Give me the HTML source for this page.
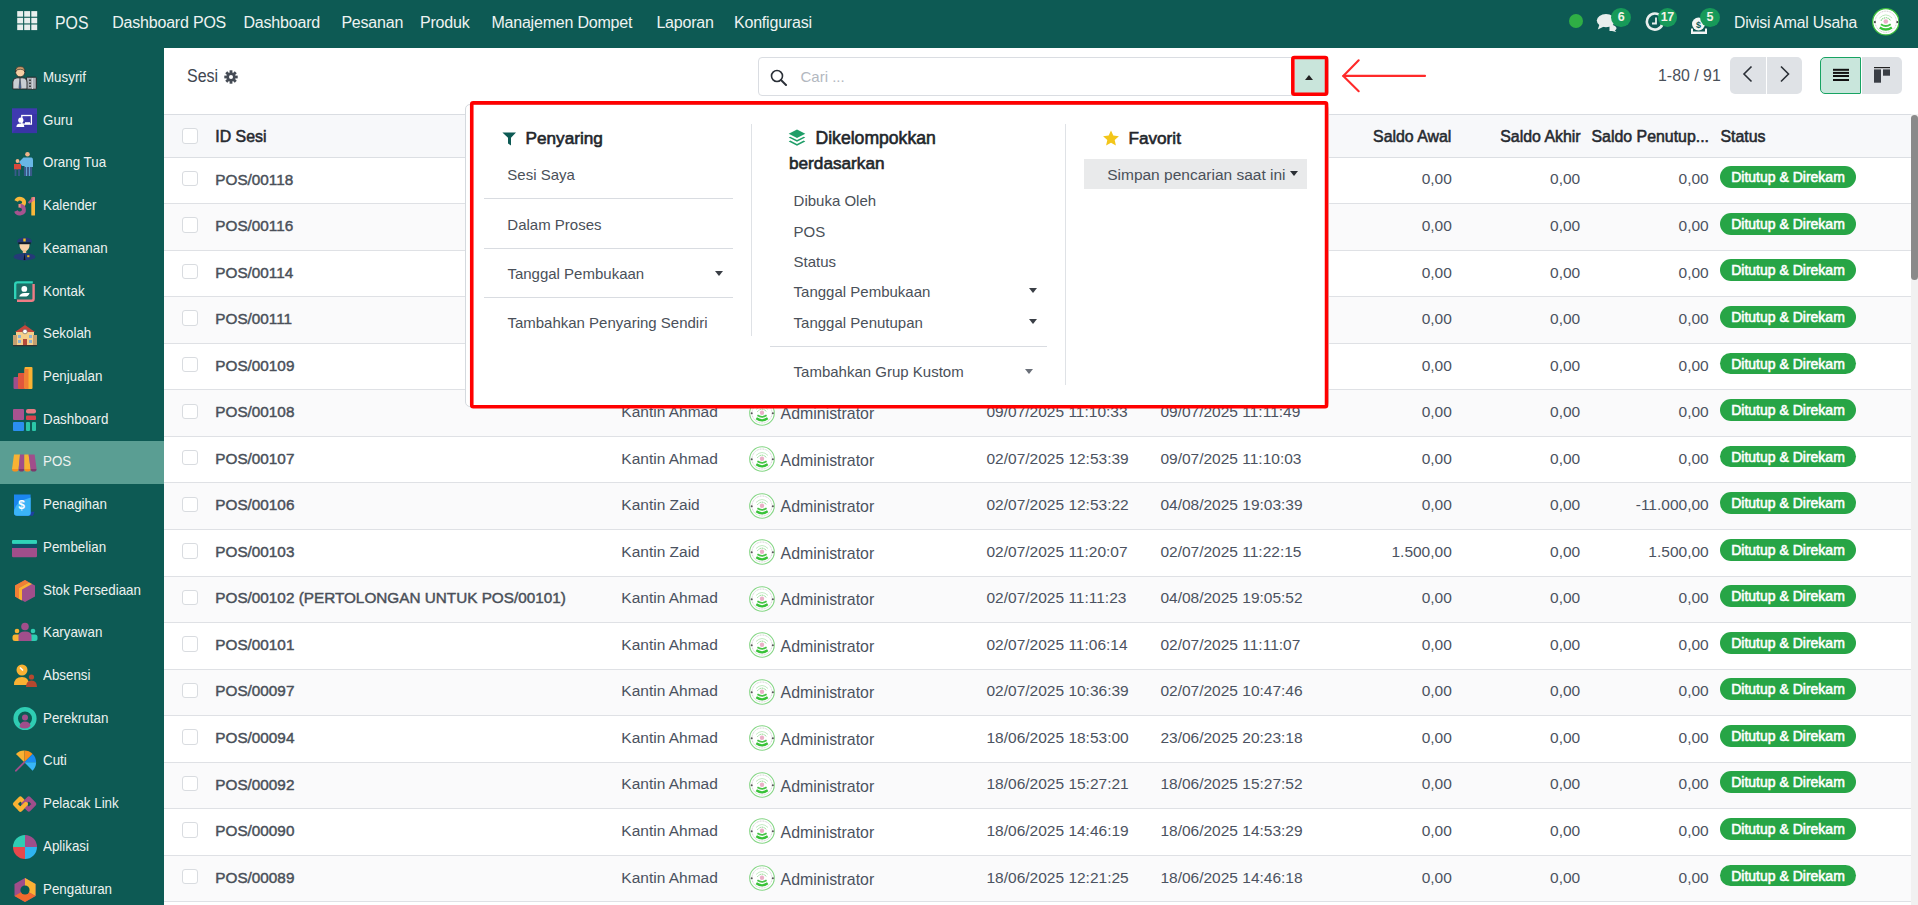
<!DOCTYPE html><html><head><meta charset="utf-8"><title>Sesi - POS</title><style>
*{box-sizing:border-box;margin:0;padding:0}
html,body{width:1918px;height:905px;overflow:hidden;background:#fff}
body{font-family:"Liberation Sans",sans-serif;position:relative;color:#4a5059}
.ab{position:absolute;white-space:nowrap}
#nav{position:absolute;left:0;top:0;width:1918px;height:48px;background:#0d5a54}
#side{position:absolute;left:0;top:48px;width:164px;height:857px;background:#0d5a54}
.nt{position:absolute;color:#eef3f2;font-size:16px;line-height:18px;white-space:nowrap;letter-spacing:-0.2px}
.si{position:absolute;left:0;width:164px;height:43px}
.si .tx{position:absolute;left:43px;top:11.9px;color:#eef2f1;font-size:15px;line-height:18px;white-space:nowrap;transform:scaleX(0.89);transform-origin:0 0}
.si svg{position:absolute;left:12px;top:9px}
.rw{position:absolute;left:164px;width:1747px;border-bottom:1px solid #dfe1e5}
.cb{position:absolute;left:182.3px;width:15.4px;height:15.4px;border:1px solid #d9dce0;border-radius:3px;background:#fff}
.c{position:absolute;font-size:15.5px;line-height:18px;white-space:nowrap;color:#4b5260}
.r{text-align:right}
.idc{font-weight:normal;color:#4a5059;-webkit-text-stroke:0.45px #4a5059}
.hd{font-weight:normal;color:#262a30;-webkit-text-stroke:0.55px #262a30}
.bdg{position:absolute;left:1720px;width:136px;height:21.8px;border-radius:11px;background:#27a546;color:#fff;font-weight:normal;font-size:14px;line-height:22.6px;text-align:center;-webkit-text-stroke:0.55px #fff}
.av{position:absolute;left:748.5px;width:26px;height:26px}
.dd{position:absolute;font-size:15px;line-height:18px;white-space:nowrap;color:#4a5059}
.dh{position:absolute;font-size:16px;line-height:18px;white-space:nowrap;color:#22262b;font-weight:normal;-webkit-text-stroke:0.6px #22262b}
.sep{position:absolute;height:1px;background:#d9dce1}
.vsep{position:absolute;width:1px;background:#dfe2e6}
.caret{position:absolute;width:0;height:0;border-left:4.5px solid transparent;border-right:4.5px solid transparent;border-top:5px solid #333}
</style></head><body>
<div id="nav">
<svg class="ab" style="left:0;top:0" width="48" height="48"><rect x="17.2" y="11.1" width="5.9" height="5.6" fill="#e9efee"/><rect x="24.2" y="11.1" width="5.9" height="5.6" fill="#e9efee"/><rect x="31.3" y="11.1" width="5.9" height="5.6" fill="#e9efee"/><rect x="17.2" y="17.8" width="5.9" height="5.6" fill="#e9efee"/><rect x="24.2" y="17.8" width="5.9" height="5.6" fill="#e9efee"/><rect x="31.3" y="17.8" width="5.9" height="5.6" fill="#e9efee"/><rect x="17.2" y="24.5" width="5.9" height="5.6" fill="#e9efee"/><rect x="24.2" y="24.5" width="5.9" height="5.6" fill="#e9efee"/><rect x="31.3" y="24.5" width="5.9" height="5.6" fill="#e9efee"/></svg>
<div class="nt" style="left:55px;top:13px;font-size:18px;line-height:20px;transform:scaleX(0.88);transform-origin:0 0;letter-spacing:0">POS</div>
<div class="nt" style="left:112.2px;top:14px">Dashboard POS</div>
<div class="nt" style="left:243.5px;top:14px">Dashboard</div>
<div class="nt" style="left:341.4px;top:14px">Pesanan</div>
<div class="nt" style="left:420.0px;top:14px">Produk</div>
<div class="nt" style="left:491.4px;top:14px">Manajemen Dompet</div>
<div class="nt" style="left:656.4px;top:14px">Laporan</div>
<div class="nt" style="left:734.0px;top:14px">Konfigurasi</div>
</div>
<div class="ab" style="left:1569.3px;top:14px;width:14px;height:14px;border-radius:50%;background:#2fae45"></div>
<svg class="ab" style="left:1596px;top:13px" width="23" height="19" viewBox="0 0 23 19"><path d="M13.5 11.5 C17.5 11.5 20.5 13.5 20.5 15.2 C20.5 16 19.8 16.8 18.8 17.3 L20.3 19 L16 17.9 C15.2 18 14.4 18 13.5 18 Z" fill="#e9eeed"/><ellipse cx="10" cy="7.6" rx="9.2" ry="6.6" fill="#e9eeed"/><path d="M3.5 11.5 L1.8 16.5 L8 13.5 Z" fill="#e9eeed"/></svg>
<svg class="ab" style="left:1645px;top:12px" width="20" height="20" viewBox="0 0 20 20"><path d="M15.9 4.3 A8 8 0 1 0 17.5 12" fill="none" stroke="#e9eeed" stroke-width="2.6"/><path d="M11 5.5 V11.5 H7" fill="none" stroke="#e9eeed" stroke-width="1.8"/></svg>
<svg class="ab" style="left:1690px;top:17px" width="19" height="18" viewBox="0 0 19 18"><circle cx="8.5" cy="7" r="6.5" fill="#f2f5f4"/><text x="8.5" y="10.5" font-size="9" font-family="Liberation Sans" text-anchor="middle" fill="#0d5a54" font-weight="bold">$</text><path d="M1 11.5 H3 V14.5 H15 V11.5 H17 V17 H1 Z" fill="#f2f5f4"/></svg>
<div class="ab" style="left:1611.2px;top:7.5px;width:19.5px;height:19px;border-radius:50%;background:#179a59;color:#f4f4e8;font-size:12.5px;line-height:19px;text-align:center;font-weight:bold;letter-spacing:-0.5px">6</div>
<div class="ab" style="left:1657.5px;top:7.5px;width:19.5px;height:19px;border-radius:50%;background:#179a59;color:#f4f4e8;font-size:12.5px;line-height:19px;text-align:center;font-weight:bold;letter-spacing:-0.5px">17</div>
<div class="ab" style="left:1700.0px;top:7.5px;width:19.5px;height:19px;border-radius:50%;background:#179a59;color:#f4f4e8;font-size:12.5px;line-height:19px;text-align:center;font-weight:bold;letter-spacing:-0.5px">5</div>
<div class="nt" style="left:1734px;top:14px;font-size:15.8px;letter-spacing:-0.25px">Divisi Amal Usaha</div>
<svg class="ab" style="left:1871.8px;top:8px" width="27.6" height="27.6" viewBox="0 0 26 26"><circle cx="13" cy="13" r="12.4" fill="#fff" stroke="#3fc03f" stroke-width="1.2"/><circle cx="13" cy="13" r="10" fill="none" stroke="#bdbdbd" stroke-width="0.8" stroke-dasharray="0.9 0.7"/><circle cx="2.7" cy="13.3" r="1" fill="#444"/><circle cx="23.9" cy="13.3" r="1" fill="#444"/><path d="M8.3 11.8 Q13 6.5 17.7 11.8" fill="none" stroke="#7fd37f" stroke-width="1" stroke-dasharray="1.2 0.6"/><path d="M7 9.5 Q13 3.5 19 9.5" fill="none" stroke="#b5e6b5" stroke-width="0.8"/><circle cx="13" cy="12.7" r="2.2" fill="#ebb0c8"/><path d="M8.4 15.3 Q13 18.6 17.6 15.3" fill="none" stroke="#47c447" stroke-width="1.7"/><path d="M7.3 18.3 Q13 22.3 18.7 18.3" fill="none" stroke="#38c238" stroke-width="2.3"/></svg>
<div id="side"></div>
<div class="si" style="top:56.1px"><svg width="26" height="26" viewBox="0 0 26 26"><rect x="14.5" y="12.2" width="9.8" height="12" rx="0.8" fill="#aab0b6" stroke="#222" stroke-width="0.9"/><path d="M17 14.5 h2 v1.5 h-2z M17 17.5 h2 v1.5 h-2z M17 20.5 h2 v1.5 h-2z" fill="#444"/><path d="M20.5 13 V24" stroke="#d0d4d8" stroke-width="1"/><path d="M0.8 24 V17 Q1 13 5 12.8 H10.5 Q14.8 13 15 17 V24 Z" fill="#c9ced3" stroke="#222" stroke-width="0.9"/><path d="M8 13 L7 22.5 L8 24 L9 22.5 Z" fill="#4a6fb0" stroke="#222" stroke-width="0.5"/><circle cx="8.2" cy="7.2" r="4.6" fill="#f5cfa4" stroke="#222" stroke-width="0.7"/><path d="M3.5 7 Q3.3 1.5 8.2 1.6 Q13 1.5 12.9 7 Q12 4 8.2 4.3 Q4.5 4 3.5 7Z" fill="#c89a6a" stroke="#222" stroke-width="0.6"/></svg><div class="tx">Musyrif</div></div>
<div class="si" style="top:98.8px"><svg width="26" height="26" viewBox="0 0 26 26"><rect x="0" y="0.3" width="25" height="24.8" fill="#3f3ab0"/><path d="M0 25.1 L19 6 L25 6 V25.1 Z" fill="#3532a0" opacity="0.6"/><rect x="9.8" y="7.5" width="9.6" height="8.6" fill="none" stroke="#fff" stroke-width="1.3"/><rect x="13" y="14.2" width="5" height="2" fill="#fff"/><circle cx="8.8" cy="12.2" r="2.6" fill="#fff"/><path d="M4.4 18.9 Q4.6 15.6 8.4 15.6 Q12.2 15.6 12.3 18.9Z" fill="#fff"/></svg><div class="tx">Guru</div></div>
<div class="si" style="top:141.5px"><svg width="26" height="26" viewBox="0 0 26 26"><circle cx="15.5" cy="3.2" r="2.3" fill="#f0b48a"/><path d="M11.5 6.5 H19.5 Q21 6.7 21 9 V16 H19.5 V25 H12.5 V15 H10 L7 11 L8.5 9.5 Z" fill="#69b7e6"/><path d="M13 16 V25 M16 16 V25 M19 16 V25" stroke="#3a5a8a" stroke-width="2.2"/><circle cx="5.5" cy="10" r="1.9" fill="#f0b48a"/><path d="M2 13 H9 V18.5 H2Z" fill="#d9483b"/><path d="M3.5 18 V25 M7 18 V25" stroke="#3a5a8a" stroke-width="1.8"/></svg><div class="tx">Orang Tua</div></div>
<div class="si" style="top:184.3px"><svg width="26" height="26" viewBox="0 0 26 26"><path d="M4.2 8 A4.1 3.6 0 1 1 8.1 12.9" fill="none" stroke="#f9b83a" stroke-width="3.9"/><path d="M8.1 12.7 A4.1 3.9 0 1 1 4.0 18" fill="none" stroke="#a6538f" stroke-width="3.9"/><path d="M6.5 12.8 H8.6" stroke="#f08a8a" stroke-width="3.6"/><rect x="19.3" y="4.2" width="3.7" height="18.3" rx="0.6" fill="#f9b83a"/><path d="M15.9 9.2 L20.8 4.3 Q22 3.3 23 4.5 V6.8 L17.2 10.8 Z" fill="#b75a8c"/><path d="M20.5 4.5 Q22 3.3 23 4.5 V7 L20 8.7Z" fill="#f08a8a"/></svg><div class="tx">Kalender</div></div>
<div class="si" style="top:227.0px"><svg width="26" height="26" viewBox="0 0 26 26"><path d="M5 6.5 Q4.5 2 12.5 1.5 Q20.5 2 20 6.5 Z" fill="#253a78"/><rect x="6.3" y="6.3" width="12.4" height="2" fill="#121a2c"/><path d="M11.3 2.5 H13.7 V5.5 H11.3Z" fill="#f3c41c"/><path d="M7.4 8.3 H17.6 Q17.6 14.8 12.5 15.3 Q7.4 14.8 7.4 8.3Z" fill="#f9d3a9"/><rect x="10.8" y="14" width="3.4" height="3" fill="#f0c090"/><ellipse cx="12.5" cy="20.8" rx="11" ry="3.6" fill="#253a78"/><path d="M12.5 17.2 L11.6 24 H13.4Z" fill="#111"/><rect x="15.2" y="19.2" width="2.2" height="2" fill="#e9b820"/></svg><div class="tx">Keamanan</div></div>
<div class="si" style="top:269.7px"><svg width="26" height="26" viewBox="0 0 26 26"><rect x="4.4" y="4.6" width="16.5" height="16.5" fill="#1d6e66"/><path d="M21.6 5 V19.8 Q21.6 21.8 19.6 21.8 H5" fill="none" stroke="#ef7c85" stroke-width="2.4"/><path d="M3.2 20 V5.6 Q3.2 3.4 5.4 3.4 H20.8" fill="none" stroke="#2fd3b8" stroke-width="2.4"/><circle cx="12.3" cy="9.9" r="2.9" fill="#fff"/><path d="M7.2 17.6 Q8.4 13.9 12.3 13.9 H17.6 Q16.6 17.6 12.6 17.6 Z" fill="#fff"/></svg><div class="tx">Kontak</div></div>
<div class="si" style="top:312.4px"><svg width="26" height="26" viewBox="0 0 26 26"><path d="M3 11 L13 4 L23 11 Z" fill="#c5463b"/><rect x="4" y="11" width="18" height="13" fill="#f6d08a"/><rect x="1" y="14" width="4" height="10" fill="#c5a070"/><rect x="21" y="14" width="4" height="10" fill="#c5a070"/><circle cx="13" cy="10.5" r="2.3" fill="#fff" stroke="#555" stroke-width="0.6"/><rect x="11" y="18" width="4" height="6" fill="#b54a3a"/><path d="M6 14 h3 v3 h-3z M17 14 h3 v3 h-3z M6 19 h3 v3 h-3z M17 19 h3 v3 h-3z" fill="#8fb3d0"/><rect x="1" y="24" width="24" height="1.3" fill="#333"/><path d="M13 4 V1" stroke="#555" stroke-width="0.8"/></svg><div class="tx">Sekolah</div></div>
<div class="si" style="top:355.1px"><svg width="26" height="26" viewBox="0 0 26 26"><rect x="1.5" y="13" width="6" height="12" rx="1" fill="#a04e8b"/><rect x="6" y="9" width="7" height="16" rx="1" fill="#e0563c"/><rect x="12.5" y="3" width="8" height="22" rx="1" fill="#f9b233"/><rect x="12.5" y="5" width="4" height="20" fill="#f07f35"/></svg><div class="tx">Penjualan</div></div>
<div class="si" style="top:397.9px"><svg width="26" height="26" viewBox="0 0 26 26"><rect x="1" y="2" width="11" height="11" rx="1" fill="#a65390"/><rect x="14" y="2" width="10" height="4.5" rx="2" fill="#e77b84"/><rect x="14" y="8.5" width="10" height="4.5" rx="1" fill="#d8434d"/><rect x="1" y="15" width="11" height="9" rx="1" fill="#2b8ef0"/><rect x="14" y="15" width="4" height="9" rx="1" fill="#2bc5a8"/><rect x="20" y="15" width="4" height="9" rx="1" fill="#2bc5a8"/></svg><div class="tx">Dashboard</div></div>
<div class="si" style="top:440.6px;background:#5a9e93"><svg width="26" height="26" viewBox="0 0 26 26"><path d="M2 4.5 H8 L6.6 19 H0 Z" fill="#f9b233"/><path d="M8 4.5 H12.3 V19 H6.6 Z" fill="#a04e8b"/><path d="M12.3 4.5 H16.6 L18.6 19 H12.3 Z" fill="#f9b233"/><path d="M16.6 4.5 H22.6 L24.6 19 H18.6 Z" fill="#a04e8b"/><path d="M0 19 A3.3 2.6 0 0 0 6.6 19Z" fill="#f7901e"/><path d="M6.6 19 A2.85 2.6 0 0 0 12.3 19Z" fill="#7d3a6d"/><path d="M12.3 19 A3.15 2.6 0 0 0 18.6 19Z" fill="#f7901e"/><path d="M18.6 19 A3 2.6 0 0 0 24.6 19Z" fill="#7d3a6d"/></svg><div class="tx">POS</div></div>
<div class="si" style="top:483.3px"><svg width="26" height="26" viewBox="0 0 26 26"><path d="M8.6 19.8 H22.6 L21 23.7 H8.6Z" fill="#1e3f9e"/><path d="M2 2.5 H18.6 V21 Q18.6 23.7 16 23.7 H5 Q2 23.7 2 20.5Z" fill="#1b86ef"/><path d="M2 20.5 Q2 10 18.6 5.5 V21 Q18.6 23.7 16 23.7 H5 Q2 23.7 2 20.5Z" fill="#3bb4f7"/><text x="6.2" y="17.2" font-family="Liberation Sans" font-weight="bold" font-size="12" fill="#fff">$</text></svg><div class="tx">Penagihan</div></div>
<div class="si" style="top:526.0px"><svg width="26" height="26" viewBox="0 0 26 26"><rect x="0" y="5" width="25" height="4" rx="1" fill="#2fd3b8"/><rect x="0" y="8.9" width="25" height="4" fill="#0f4d66"/><path d="M0 12.9 H25 V21 Q25 22.2 23.8 22.2 H1.2 Q0 22.2 0 21Z" fill="#a04e8b"/></svg><div class="tx">Pembelian</div></div>
<div class="si" style="top:568.7px"><svg width="26" height="26" viewBox="0 0 26 26"><path d="M13 2 L23 7.5 V18.5 L13 24 L3 18.5 V7.5 Z" fill="#a04e8b"/><path d="M3 7.5 L13 2 L17 4.5 L7 10 V21 L3 18.5Z" fill="#f07f35"/><path d="M7 10 L17 4.5 L20 6 L10 11.5 V22.5 L7 21Z" fill="#f9b233"/></svg><div class="tx">Stok Persediaan</div></div>
<div class="si" style="top:611.5px"><svg width="26" height="26" viewBox="0 0 26 26"><circle cx="13" cy="5.5" r="3.8" fill="#a04e8b"/><circle cx="5" cy="10" r="2.3" fill="#f9b233"/><circle cx="21" cy="10" r="2.3" fill="#2fcdb3"/><rect x="0.5" y="13.5" width="11" height="6.5" rx="2.5" fill="#f9b233"/><rect x="14.5" y="13.5" width="11" height="6.5" rx="2.5" fill="#2fcdb3"/><path d="M6.5 20 V15 Q6.5 10.5 13 10.5 Q19.5 10.5 19.5 15 V20 Z" fill="#a04e8b"/></svg><div class="tx">Karyawan</div></div>
<div class="si" style="top:654.2px"><svg width="26" height="26" viewBox="0 0 26 26"><circle cx="10" cy="7" r="5.5" fill="#f9b233"/><path d="M8 4.5 L11 7.5" stroke="#fff" stroke-width="1.6"/><circle cx="19.5" cy="14" r="2.6" fill="#b5482f"/><path d="M2 22 Q2 14 10 14 Q17 14 17 22 Z" fill="#f9b233"/><path d="M14 24 Q14 17.5 19.5 17.5 Q25 17.5 25 24Z" fill="#b5482f"/></svg><div class="tx">Absensi</div></div>
<div class="si" style="top:696.9px"><svg width="26" height="26" viewBox="0 0 26 26"><circle cx="13" cy="12.5" r="9.3" fill="none" stroke="#2fcdb3" stroke-width="4.6"/><circle cx="13" cy="11.5" r="3" fill="#a04e8b"/><path d="M7.5 21 Q8 15.5 13 15.5 Q18 15.5 18.5 20 Q16 22.5 13 22.5 Q9.5 22.5 7.5 21Z" fill="#a04e8b"/></svg><div class="tx">Perekrutan</div></div>
<div class="si" style="top:739.6px"><svg width="26" height="26" viewBox="0 0 26 26"><path d="M12.30 13.30 L3.96 4.96 A11.8 11.8 0 0 1 12.30 1.50 Z" fill="#f9b233"/><path d="M12.30 13.30 L12.30 1.50 A11.8 11.8 0 0 1 20.64 4.96 Z" fill="#f7901e"/><path d="M12.30 13.30 L20.64 4.96 A11.8 11.8 0 0 1 24.10 13.30 Z" fill="#1a8cf0"/><path d="M12.30 13.30 L24.10 13.30 A11.8 11.8 0 0 1 20.64 21.64 Z" fill="#38b6f7"/><path d="M12.3 13.3 L4 21.7" stroke="#a04e8b" stroke-width="1.9" stroke-linecap="round"/></svg><div class="tx">Cuti</div></div>
<div class="si" style="top:782.3px"><svg width="26" height="26" viewBox="0 0 26 26"><path d="M3 13 L8.4 7.6 L13.8 13 L8.4 18.4Z" stroke="#f9b233" stroke-width="4.2" fill="none" stroke-linejoin="round"/><path d="M11.4 13 L16.8 7.6 L22.2 13 L16.8 18.4Z" stroke="#a04e8b" stroke-width="4.2" fill="none" stroke-linejoin="round"/><path d="M13.8 13 L8.4 18.4" stroke="#f9b233" stroke-width="4.2" stroke-linecap="round"/></svg><div class="tx">Pelacak Link</div></div>
<div class="si" style="top:825.1px"><svg width="26" height="26" viewBox="0 0 26 26"><path d="M13 13 V1 A12 12 0 0 0 1 13Z" fill="#2fcdb3"/><path d="M13 13 V1 A12 12 0 0 1 25 13Z" fill="#a04e8b"/><path d="M13 13 H1 A12 12 0 0 0 13 25Z" fill="#e8484c"/><path d="M13 13 H25 A12 12 0 0 1 13 25Z" fill="#2fb4f0"/></svg><div class="tx">Aplikasi</div></div>
<div class="si" style="top:867.8px"><svg width="26" height="26" viewBox="0 0 26 26"><path d="M13 1 L23.5 7 V19 L13 25 L2.5 19 V7Z" fill="#a04e8b"/><path d="M13 1 L23.5 7 V19 L13 13Z" fill="#f9b233"/><path d="M23.5 19 L13 25 L2.5 19 L13 13Z" fill="#f26a2e"/><circle cx="13" cy="13" r="4.6" fill="#0b5a54"/></svg><div class="tx">Pengaturan</div></div>
<div class="ab" style="left:186.6px;top:65.4px;font-size:18px;line-height:22px;color:#3f4650;transform:scaleX(0.89);transform-origin:0 0">Sesi</div>
<svg class="ab" style="left:224px;top:70px" width="14" height="14" viewBox="0 0 14 14"><g fill="#454b55"><circle cx="7" cy="7" r="4.6"/><rect x="5.6" y="0.3" width="2.8" height="3.4" transform="rotate(0 7 7)"/><rect x="5.6" y="0.3" width="2.8" height="3.4" transform="rotate(45 7 7)"/><rect x="5.6" y="0.3" width="2.8" height="3.4" transform="rotate(90 7 7)"/><rect x="5.6" y="0.3" width="2.8" height="3.4" transform="rotate(135 7 7)"/><rect x="5.6" y="0.3" width="2.8" height="3.4" transform="rotate(180 7 7)"/><rect x="5.6" y="0.3" width="2.8" height="3.4" transform="rotate(225 7 7)"/><rect x="5.6" y="0.3" width="2.8" height="3.4" transform="rotate(270 7 7)"/><rect x="5.6" y="0.3" width="2.8" height="3.4" transform="rotate(315 7 7)"/></g><circle cx="7" cy="7" r="2" fill="#fff"/></svg>
<div class="ab" style="left:757.6px;top:57px;width:571px;height:39px;border:1px solid #dadde2;border-radius:4px;background:#fff"></div>
<svg class="ab" style="left:770px;top:68.5px" width="18" height="17" viewBox="0 0 18 17"><circle cx="7" cy="7" r="5.5" fill="none" stroke="#2b3038" stroke-width="1.6"/><path d="M11 11 L16 16" stroke="#2b3038" stroke-width="2" stroke-linecap="round"/></svg>
<div class="ab" style="left:800.5px;top:68px;font-size:15px;line-height:18px;color:#b3b8bf">Cari ...</div>
<div class="ab" style="left:1294.6px;top:59px;width:30.5px;height:34px;background:#c9e5db"></div>
<div class="caret" style="left:1304.8px;top:74.7px;border-top:0;border-bottom:5.3px solid #222;border-left-width:4.8px;border-right-width:4.8px"></div>
<div class="ab" style="left:1658px;top:66.6px;font-size:15.9px;line-height:18px;color:#4a5059">1-80 / 91</div>
<div class="ab" style="left:1730px;top:57px;width:72px;height:37px;background:#dfe2e6;border-radius:5px"></div>
<div class="ab" style="left:1766px;top:57px;width:1px;height:37px;background:#fff"></div>
<svg class="ab" style="left:1741px;top:65px" width="14" height="18" viewBox="0 0 14 18"><path d="M10.5 1.5 L3 9 L10.5 16.5" fill="none" stroke="#2a2f36" stroke-width="1.6"/></svg>
<svg class="ab" style="left:1778px;top:65px" width="14" height="18" viewBox="0 0 14 18"><path d="M3 1.5 L10.5 9 L3 16.5" fill="none" stroke="#2a2f36" stroke-width="1.6"/></svg>
<div class="ab" style="left:1820px;top:57px;width:41px;height:37px;background:#c9e6dc;border:1px solid #17a362;border-radius:5px 1px 1px 5px"></div>
<div class="ab" style="left:1862px;top:57px;width:40px;height:37px;background:#dfe2e6;border-radius:0 5px 5px 0"></div>
<svg class="ab" style="left:1832px;top:68px" width="18" height="14" viewBox="0 0 18 14"><rect x="1" y="0.8" width="16" height="2" fill="#111"/><rect x="1" y="3.9" width="16" height="2" fill="#111"/><rect x="1" y="7" width="16" height="2" fill="#111"/><rect x="1" y="11" width="16" height="2" fill="#111"/></svg>
<svg class="ab" style="left:1873px;top:66px" width="18" height="18" viewBox="0 0 18 18"><rect x="1" y="1" width="16" height="1.2" fill="#222"/><rect x="1" y="3.4" width="7" height="13.3" fill="#3a3e45"/><rect x="10" y="3.4" width="7" height="6.3" fill="#3a3e45"/></svg>
<div class="rw" style="top:114px;height:44px;background:#f7f8fa;border-top:1px solid #dadde2"></div>
<div class="cb" style="top:128.2px"></div>
<div class="c hd" style="left:215.3px;top:127.69px;font-size:15.9px">ID Sesi</div>
<div class="c hd" style="left:621.0px;top:127.69px;font-size:15.9px">POS</div>
<div class="c hd" style="left:748.5px;top:127.69px;font-size:15.9px">Dibuka Oleh</div>
<div class="c hd" style="left:986.5px;top:127.69px;font-size:15.9px">Tanggal Pembukaan</div>
<div class="c hd" style="left:1160.5px;top:127.69px;font-size:15.9px">Tanggal Penutupan</div>
<div class="c hd r" style="left:1151.4px;width:300px;top:127.69px;font-size:15.9px">Saldo Awal</div>
<div class="c hd r" style="left:1280.6px;width:300px;top:127.69px;font-size:15.9px">Saldo Akhir</div>
<div class="c hd" style="left:1591.5px;top:127.69px;font-size:15.9px">Saldo Penutup...</div>
<div class="c hd" style="left:1720.4px;top:127.69px;font-size:15.9px">Status</div>
<div class="rw" style="top:157.20px;height:47.14px;background:#fff;border:0"></div>
<div class="cb" style="top:170.80px"></div>
<div class="c idc" style="left:215.3px;top:170.50px;font-size:15.3px">POS/00118</div>
<div class="c" style="left:621.3px;top:170.43px;font-size:15.5px">Kantin Ahmad</div>
<div class="av" style="top:166.80px"><svg width="26" height="26" viewBox="0 0 26 26"><circle cx="13" cy="13" r="12.3" fill="#fff" stroke="#86d686" stroke-width="1.1"/><circle cx="13" cy="13" r="10" fill="none" stroke="#bdbdbd" stroke-width="0.8" stroke-dasharray="0.9 0.7"/><circle cx="2.7" cy="13.3" r="1" fill="#555"/><circle cx="23.9" cy="13.3" r="1" fill="#555"/><path d="M8.3 11.8 Q13 6.5 17.7 11.8" fill="none" stroke="#7fd37f" stroke-width="1" stroke-dasharray="1.2 0.6"/><path d="M7 9.5 Q13 3.5 19 9.5" fill="none" stroke="#b5e6b5" stroke-width="0.8"/><circle cx="13" cy="12.7" r="2.2" fill="#ebb0c8"/><path d="M8.4 15.3 Q13 18.6 17.6 15.3" fill="none" stroke="#47c447" stroke-width="1.7"/><path d="M7.3 18.3 Q13 22.3 18.7 18.3" fill="none" stroke="#38c238" stroke-width="2.3"/></svg></div>
<div class="c" style="left:780.6px;top:172.49px;font-size:15.9px">Administrator</div>
<div class="c" style="left:986.5px;top:170.43px;font-size:15.5px">09/07/2025 11:12:10</div>
<div class="c" style="left:1160.4px;top:170.43px;font-size:15.5px">09/07/2025 11:13:01</div>
<div class="c r" style="left:1151.8px;width:300px;top:170.43px;font-size:15.5px">0,00</div>
<div class="c r" style="left:1280.2px;width:300px;top:170.43px;font-size:15.5px">0,00</div>
<div class="c r" style="left:1408.7px;width:300px;top:170.43px;font-size:15.5px">0,00</div>
<div class="bdg" style="top:166.40px">Ditutup &amp; Direkam</div>
<div class="rw" style="top:203.74px;height:47.14px;background:#fafafb;border:0"></div>
<div class="cb" style="top:217.34px"></div>
<div class="c idc" style="left:215.3px;top:217.04px;font-size:15.3px">POS/00116</div>
<div class="c" style="left:621.3px;top:216.97px;font-size:15.5px">Kantin Ahmad</div>
<div class="av" style="top:213.34px"><svg width="26" height="26" viewBox="0 0 26 26"><circle cx="13" cy="13" r="12.3" fill="#fff" stroke="#86d686" stroke-width="1.1"/><circle cx="13" cy="13" r="10" fill="none" stroke="#bdbdbd" stroke-width="0.8" stroke-dasharray="0.9 0.7"/><circle cx="2.7" cy="13.3" r="1" fill="#555"/><circle cx="23.9" cy="13.3" r="1" fill="#555"/><path d="M8.3 11.8 Q13 6.5 17.7 11.8" fill="none" stroke="#7fd37f" stroke-width="1" stroke-dasharray="1.2 0.6"/><path d="M7 9.5 Q13 3.5 19 9.5" fill="none" stroke="#b5e6b5" stroke-width="0.8"/><circle cx="13" cy="12.7" r="2.2" fill="#ebb0c8"/><path d="M8.4 15.3 Q13 18.6 17.6 15.3" fill="none" stroke="#47c447" stroke-width="1.7"/><path d="M7.3 18.3 Q13 22.3 18.7 18.3" fill="none" stroke="#38c238" stroke-width="2.3"/></svg></div>
<div class="c" style="left:780.6px;top:219.03px;font-size:15.9px">Administrator</div>
<div class="c" style="left:986.5px;top:216.97px;font-size:15.5px">09/07/2025 11:11:50</div>
<div class="c" style="left:1160.4px;top:216.97px;font-size:15.5px">09/07/2025 11:12:05</div>
<div class="c r" style="left:1151.8px;width:300px;top:216.97px;font-size:15.5px">0,00</div>
<div class="c r" style="left:1280.2px;width:300px;top:216.97px;font-size:15.5px">0,00</div>
<div class="c r" style="left:1408.7px;width:300px;top:216.97px;font-size:15.5px">0,00</div>
<div class="bdg" style="top:212.94px">Ditutup &amp; Direkam</div>
<div class="rw" style="top:250.28px;height:47.14px;background:#fff;border:0"></div>
<div class="cb" style="top:263.88px"></div>
<div class="c idc" style="left:215.3px;top:263.58px;font-size:15.3px">POS/00114</div>
<div class="c" style="left:621.3px;top:263.51px;font-size:15.5px">Kantin Ahmad</div>
<div class="av" style="top:259.88px"><svg width="26" height="26" viewBox="0 0 26 26"><circle cx="13" cy="13" r="12.3" fill="#fff" stroke="#86d686" stroke-width="1.1"/><circle cx="13" cy="13" r="10" fill="none" stroke="#bdbdbd" stroke-width="0.8" stroke-dasharray="0.9 0.7"/><circle cx="2.7" cy="13.3" r="1" fill="#555"/><circle cx="23.9" cy="13.3" r="1" fill="#555"/><path d="M8.3 11.8 Q13 6.5 17.7 11.8" fill="none" stroke="#7fd37f" stroke-width="1" stroke-dasharray="1.2 0.6"/><path d="M7 9.5 Q13 3.5 19 9.5" fill="none" stroke="#b5e6b5" stroke-width="0.8"/><circle cx="13" cy="12.7" r="2.2" fill="#ebb0c8"/><path d="M8.4 15.3 Q13 18.6 17.6 15.3" fill="none" stroke="#47c447" stroke-width="1.7"/><path d="M7.3 18.3 Q13 22.3 18.7 18.3" fill="none" stroke="#38c238" stroke-width="2.3"/></svg></div>
<div class="c" style="left:780.6px;top:265.57px;font-size:15.9px">Administrator</div>
<div class="c" style="left:986.5px;top:263.51px;font-size:15.5px">09/07/2025 11:11:30</div>
<div class="c" style="left:1160.4px;top:263.51px;font-size:15.5px">09/07/2025 11:11:45</div>
<div class="c r" style="left:1151.8px;width:300px;top:263.51px;font-size:15.5px">0,00</div>
<div class="c r" style="left:1280.2px;width:300px;top:263.51px;font-size:15.5px">0,00</div>
<div class="c r" style="left:1408.7px;width:300px;top:263.51px;font-size:15.5px">0,00</div>
<div class="bdg" style="top:259.48px">Ditutup &amp; Direkam</div>
<div class="rw" style="top:296.82px;height:47.14px;background:#fafafb;border:0"></div>
<div class="cb" style="top:310.42px"></div>
<div class="c idc" style="left:215.3px;top:310.12px;font-size:15.3px">POS/00111</div>
<div class="c" style="left:621.3px;top:310.05px;font-size:15.5px">Kantin Ahmad</div>
<div class="av" style="top:306.42px"><svg width="26" height="26" viewBox="0 0 26 26"><circle cx="13" cy="13" r="12.3" fill="#fff" stroke="#86d686" stroke-width="1.1"/><circle cx="13" cy="13" r="10" fill="none" stroke="#bdbdbd" stroke-width="0.8" stroke-dasharray="0.9 0.7"/><circle cx="2.7" cy="13.3" r="1" fill="#555"/><circle cx="23.9" cy="13.3" r="1" fill="#555"/><path d="M8.3 11.8 Q13 6.5 17.7 11.8" fill="none" stroke="#7fd37f" stroke-width="1" stroke-dasharray="1.2 0.6"/><path d="M7 9.5 Q13 3.5 19 9.5" fill="none" stroke="#b5e6b5" stroke-width="0.8"/><circle cx="13" cy="12.7" r="2.2" fill="#ebb0c8"/><path d="M8.4 15.3 Q13 18.6 17.6 15.3" fill="none" stroke="#47c447" stroke-width="1.7"/><path d="M7.3 18.3 Q13 22.3 18.7 18.3" fill="none" stroke="#38c238" stroke-width="2.3"/></svg></div>
<div class="c" style="left:780.6px;top:312.11px;font-size:15.9px">Administrator</div>
<div class="c" style="left:986.5px;top:310.05px;font-size:15.5px">09/07/2025 11:11:00</div>
<div class="c" style="left:1160.4px;top:310.05px;font-size:15.5px">09/07/2025 11:11:20</div>
<div class="c r" style="left:1151.8px;width:300px;top:310.05px;font-size:15.5px">0,00</div>
<div class="c r" style="left:1280.2px;width:300px;top:310.05px;font-size:15.5px">0,00</div>
<div class="c r" style="left:1408.7px;width:300px;top:310.05px;font-size:15.5px">0,00</div>
<div class="bdg" style="top:306.02px">Ditutup &amp; Direkam</div>
<div class="rw" style="top:343.36px;height:47.14px;background:#fff;border:0"></div>
<div class="cb" style="top:356.96px"></div>
<div class="c idc" style="left:215.3px;top:356.66px;font-size:15.3px">POS/00109</div>
<div class="c" style="left:621.3px;top:356.59px;font-size:15.5px">Kantin Ahmad</div>
<div class="av" style="top:352.96px"><svg width="26" height="26" viewBox="0 0 26 26"><circle cx="13" cy="13" r="12.3" fill="#fff" stroke="#86d686" stroke-width="1.1"/><circle cx="13" cy="13" r="10" fill="none" stroke="#bdbdbd" stroke-width="0.8" stroke-dasharray="0.9 0.7"/><circle cx="2.7" cy="13.3" r="1" fill="#555"/><circle cx="23.9" cy="13.3" r="1" fill="#555"/><path d="M8.3 11.8 Q13 6.5 17.7 11.8" fill="none" stroke="#7fd37f" stroke-width="1" stroke-dasharray="1.2 0.6"/><path d="M7 9.5 Q13 3.5 19 9.5" fill="none" stroke="#b5e6b5" stroke-width="0.8"/><circle cx="13" cy="12.7" r="2.2" fill="#ebb0c8"/><path d="M8.4 15.3 Q13 18.6 17.6 15.3" fill="none" stroke="#47c447" stroke-width="1.7"/><path d="M7.3 18.3 Q13 22.3 18.7 18.3" fill="none" stroke="#38c238" stroke-width="2.3"/></svg></div>
<div class="c" style="left:780.6px;top:358.65px;font-size:15.9px">Administrator</div>
<div class="c" style="left:986.5px;top:356.59px;font-size:15.5px">09/07/2025 11:10:40</div>
<div class="c" style="left:1160.4px;top:356.59px;font-size:15.5px">09/07/2025 11:10:55</div>
<div class="c r" style="left:1151.8px;width:300px;top:356.59px;font-size:15.5px">0,00</div>
<div class="c r" style="left:1280.2px;width:300px;top:356.59px;font-size:15.5px">0,00</div>
<div class="c r" style="left:1408.7px;width:300px;top:356.59px;font-size:15.5px">0,00</div>
<div class="bdg" style="top:352.56px">Ditutup &amp; Direkam</div>
<div class="rw" style="top:389.90px;height:47.14px;background:#fafafb;border:0"></div>
<div class="cb" style="top:403.50px"></div>
<div class="c idc" style="left:215.3px;top:403.20px;font-size:15.3px">POS/00108</div>
<div class="c" style="left:621.3px;top:403.13px;font-size:15.5px">Kantin Ahmad</div>
<div class="av" style="top:399.50px"><svg width="26" height="26" viewBox="0 0 26 26"><circle cx="13" cy="13" r="12.3" fill="#fff" stroke="#86d686" stroke-width="1.1"/><circle cx="13" cy="13" r="10" fill="none" stroke="#bdbdbd" stroke-width="0.8" stroke-dasharray="0.9 0.7"/><circle cx="2.7" cy="13.3" r="1" fill="#555"/><circle cx="23.9" cy="13.3" r="1" fill="#555"/><path d="M8.3 11.8 Q13 6.5 17.7 11.8" fill="none" stroke="#7fd37f" stroke-width="1" stroke-dasharray="1.2 0.6"/><path d="M7 9.5 Q13 3.5 19 9.5" fill="none" stroke="#b5e6b5" stroke-width="0.8"/><circle cx="13" cy="12.7" r="2.2" fill="#ebb0c8"/><path d="M8.4 15.3 Q13 18.6 17.6 15.3" fill="none" stroke="#47c447" stroke-width="1.7"/><path d="M7.3 18.3 Q13 22.3 18.7 18.3" fill="none" stroke="#38c238" stroke-width="2.3"/></svg></div>
<div class="c" style="left:780.6px;top:405.19px;font-size:15.9px">Administrator</div>
<div class="c" style="left:986.5px;top:403.13px;font-size:15.5px">09/07/2025 11:10:33</div>
<div class="c" style="left:1160.4px;top:403.13px;font-size:15.5px">09/07/2025 11:11:49</div>
<div class="c r" style="left:1151.8px;width:300px;top:403.13px;font-size:15.5px">0,00</div>
<div class="c r" style="left:1280.2px;width:300px;top:403.13px;font-size:15.5px">0,00</div>
<div class="c r" style="left:1408.7px;width:300px;top:403.13px;font-size:15.5px">0,00</div>
<div class="bdg" style="top:399.10px">Ditutup &amp; Direkam</div>
<div class="rw" style="top:436.44px;height:47.14px;background:#fff;border:0"></div>
<div class="cb" style="top:450.04px"></div>
<div class="c idc" style="left:215.3px;top:449.74px;font-size:15.3px">POS/00107</div>
<div class="c" style="left:621.3px;top:449.67px;font-size:15.5px">Kantin Ahmad</div>
<div class="av" style="top:446.04px"><svg width="26" height="26" viewBox="0 0 26 26"><circle cx="13" cy="13" r="12.3" fill="#fff" stroke="#86d686" stroke-width="1.1"/><circle cx="13" cy="13" r="10" fill="none" stroke="#bdbdbd" stroke-width="0.8" stroke-dasharray="0.9 0.7"/><circle cx="2.7" cy="13.3" r="1" fill="#555"/><circle cx="23.9" cy="13.3" r="1" fill="#555"/><path d="M8.3 11.8 Q13 6.5 17.7 11.8" fill="none" stroke="#7fd37f" stroke-width="1" stroke-dasharray="1.2 0.6"/><path d="M7 9.5 Q13 3.5 19 9.5" fill="none" stroke="#b5e6b5" stroke-width="0.8"/><circle cx="13" cy="12.7" r="2.2" fill="#ebb0c8"/><path d="M8.4 15.3 Q13 18.6 17.6 15.3" fill="none" stroke="#47c447" stroke-width="1.7"/><path d="M7.3 18.3 Q13 22.3 18.7 18.3" fill="none" stroke="#38c238" stroke-width="2.3"/></svg></div>
<div class="c" style="left:780.6px;top:451.73px;font-size:15.9px">Administrator</div>
<div class="c" style="left:986.5px;top:449.67px;font-size:15.5px">02/07/2025 12:53:39</div>
<div class="c" style="left:1160.4px;top:449.67px;font-size:15.5px">09/07/2025 11:10:03</div>
<div class="c r" style="left:1151.8px;width:300px;top:449.67px;font-size:15.5px">0,00</div>
<div class="c r" style="left:1280.2px;width:300px;top:449.67px;font-size:15.5px">0,00</div>
<div class="c r" style="left:1408.7px;width:300px;top:449.67px;font-size:15.5px">0,00</div>
<div class="bdg" style="top:445.64px">Ditutup &amp; Direkam</div>
<div class="rw" style="top:482.98px;height:47.14px;background:#fafafb;border:0"></div>
<div class="cb" style="top:496.58px"></div>
<div class="c idc" style="left:215.3px;top:496.28px;font-size:15.3px">POS/00106</div>
<div class="c" style="left:621.3px;top:496.21px;font-size:15.5px">Kantin Zaid</div>
<div class="av" style="top:492.58px"><svg width="26" height="26" viewBox="0 0 26 26"><circle cx="13" cy="13" r="12.3" fill="#fff" stroke="#86d686" stroke-width="1.1"/><circle cx="13" cy="13" r="10" fill="none" stroke="#bdbdbd" stroke-width="0.8" stroke-dasharray="0.9 0.7"/><circle cx="2.7" cy="13.3" r="1" fill="#555"/><circle cx="23.9" cy="13.3" r="1" fill="#555"/><path d="M8.3 11.8 Q13 6.5 17.7 11.8" fill="none" stroke="#7fd37f" stroke-width="1" stroke-dasharray="1.2 0.6"/><path d="M7 9.5 Q13 3.5 19 9.5" fill="none" stroke="#b5e6b5" stroke-width="0.8"/><circle cx="13" cy="12.7" r="2.2" fill="#ebb0c8"/><path d="M8.4 15.3 Q13 18.6 17.6 15.3" fill="none" stroke="#47c447" stroke-width="1.7"/><path d="M7.3 18.3 Q13 22.3 18.7 18.3" fill="none" stroke="#38c238" stroke-width="2.3"/></svg></div>
<div class="c" style="left:780.6px;top:498.27px;font-size:15.9px">Administrator</div>
<div class="c" style="left:986.5px;top:496.21px;font-size:15.5px">02/07/2025 12:53:22</div>
<div class="c" style="left:1160.4px;top:496.21px;font-size:15.5px">04/08/2025 19:03:39</div>
<div class="c r" style="left:1151.8px;width:300px;top:496.21px;font-size:15.5px">0,00</div>
<div class="c r" style="left:1280.2px;width:300px;top:496.21px;font-size:15.5px">0,00</div>
<div class="c r" style="left:1408.7px;width:300px;top:496.21px;font-size:15.5px">-11.000,00</div>
<div class="bdg" style="top:492.18px">Ditutup &amp; Direkam</div>
<div class="rw" style="top:529.52px;height:47.14px;background:#fff;border:0"></div>
<div class="cb" style="top:543.12px"></div>
<div class="c idc" style="left:215.3px;top:542.82px;font-size:15.3px">POS/00103</div>
<div class="c" style="left:621.3px;top:542.75px;font-size:15.5px">Kantin Zaid</div>
<div class="av" style="top:539.12px"><svg width="26" height="26" viewBox="0 0 26 26"><circle cx="13" cy="13" r="12.3" fill="#fff" stroke="#86d686" stroke-width="1.1"/><circle cx="13" cy="13" r="10" fill="none" stroke="#bdbdbd" stroke-width="0.8" stroke-dasharray="0.9 0.7"/><circle cx="2.7" cy="13.3" r="1" fill="#555"/><circle cx="23.9" cy="13.3" r="1" fill="#555"/><path d="M8.3 11.8 Q13 6.5 17.7 11.8" fill="none" stroke="#7fd37f" stroke-width="1" stroke-dasharray="1.2 0.6"/><path d="M7 9.5 Q13 3.5 19 9.5" fill="none" stroke="#b5e6b5" stroke-width="0.8"/><circle cx="13" cy="12.7" r="2.2" fill="#ebb0c8"/><path d="M8.4 15.3 Q13 18.6 17.6 15.3" fill="none" stroke="#47c447" stroke-width="1.7"/><path d="M7.3 18.3 Q13 22.3 18.7 18.3" fill="none" stroke="#38c238" stroke-width="2.3"/></svg></div>
<div class="c" style="left:780.6px;top:544.81px;font-size:15.9px">Administrator</div>
<div class="c" style="left:986.5px;top:542.75px;font-size:15.5px">02/07/2025 11:20:07</div>
<div class="c" style="left:1160.4px;top:542.75px;font-size:15.5px">02/07/2025 11:22:15</div>
<div class="c r" style="left:1151.8px;width:300px;top:542.75px;font-size:15.5px">1.500,00</div>
<div class="c r" style="left:1280.2px;width:300px;top:542.75px;font-size:15.5px">0,00</div>
<div class="c r" style="left:1408.7px;width:300px;top:542.75px;font-size:15.5px">1.500,00</div>
<div class="bdg" style="top:538.72px">Ditutup &amp; Direkam</div>
<div class="rw" style="top:576.06px;height:47.14px;background:#fafafb;border:0"></div>
<div class="cb" style="top:589.66px"></div>
<div class="c idc" style="left:215.3px;top:589.36px;font-size:15.3px">POS/00102 (PERTOLONGAN UNTUK POS/00101)</div>
<div class="c" style="left:621.3px;top:589.29px;font-size:15.5px">Kantin Ahmad</div>
<div class="av" style="top:585.66px"><svg width="26" height="26" viewBox="0 0 26 26"><circle cx="13" cy="13" r="12.3" fill="#fff" stroke="#86d686" stroke-width="1.1"/><circle cx="13" cy="13" r="10" fill="none" stroke="#bdbdbd" stroke-width="0.8" stroke-dasharray="0.9 0.7"/><circle cx="2.7" cy="13.3" r="1" fill="#555"/><circle cx="23.9" cy="13.3" r="1" fill="#555"/><path d="M8.3 11.8 Q13 6.5 17.7 11.8" fill="none" stroke="#7fd37f" stroke-width="1" stroke-dasharray="1.2 0.6"/><path d="M7 9.5 Q13 3.5 19 9.5" fill="none" stroke="#b5e6b5" stroke-width="0.8"/><circle cx="13" cy="12.7" r="2.2" fill="#ebb0c8"/><path d="M8.4 15.3 Q13 18.6 17.6 15.3" fill="none" stroke="#47c447" stroke-width="1.7"/><path d="M7.3 18.3 Q13 22.3 18.7 18.3" fill="none" stroke="#38c238" stroke-width="2.3"/></svg></div>
<div class="c" style="left:780.6px;top:591.35px;font-size:15.9px">Administrator</div>
<div class="c" style="left:986.5px;top:589.29px;font-size:15.5px">02/07/2025 11:11:23</div>
<div class="c" style="left:1160.4px;top:589.29px;font-size:15.5px">04/08/2025 19:05:52</div>
<div class="c r" style="left:1151.8px;width:300px;top:589.29px;font-size:15.5px">0,00</div>
<div class="c r" style="left:1280.2px;width:300px;top:589.29px;font-size:15.5px">0,00</div>
<div class="c r" style="left:1408.7px;width:300px;top:589.29px;font-size:15.5px">0,00</div>
<div class="bdg" style="top:585.26px">Ditutup &amp; Direkam</div>
<div class="rw" style="top:622.60px;height:47.14px;background:#fff;border:0"></div>
<div class="cb" style="top:636.20px"></div>
<div class="c idc" style="left:215.3px;top:635.90px;font-size:15.3px">POS/00101</div>
<div class="c" style="left:621.3px;top:635.83px;font-size:15.5px">Kantin Ahmad</div>
<div class="av" style="top:632.20px"><svg width="26" height="26" viewBox="0 0 26 26"><circle cx="13" cy="13" r="12.3" fill="#fff" stroke="#86d686" stroke-width="1.1"/><circle cx="13" cy="13" r="10" fill="none" stroke="#bdbdbd" stroke-width="0.8" stroke-dasharray="0.9 0.7"/><circle cx="2.7" cy="13.3" r="1" fill="#555"/><circle cx="23.9" cy="13.3" r="1" fill="#555"/><path d="M8.3 11.8 Q13 6.5 17.7 11.8" fill="none" stroke="#7fd37f" stroke-width="1" stroke-dasharray="1.2 0.6"/><path d="M7 9.5 Q13 3.5 19 9.5" fill="none" stroke="#b5e6b5" stroke-width="0.8"/><circle cx="13" cy="12.7" r="2.2" fill="#ebb0c8"/><path d="M8.4 15.3 Q13 18.6 17.6 15.3" fill="none" stroke="#47c447" stroke-width="1.7"/><path d="M7.3 18.3 Q13 22.3 18.7 18.3" fill="none" stroke="#38c238" stroke-width="2.3"/></svg></div>
<div class="c" style="left:780.6px;top:637.89px;font-size:15.9px">Administrator</div>
<div class="c" style="left:986.5px;top:635.83px;font-size:15.5px">02/07/2025 11:06:14</div>
<div class="c" style="left:1160.4px;top:635.83px;font-size:15.5px">02/07/2025 11:11:07</div>
<div class="c r" style="left:1151.8px;width:300px;top:635.83px;font-size:15.5px">0,00</div>
<div class="c r" style="left:1280.2px;width:300px;top:635.83px;font-size:15.5px">0,00</div>
<div class="c r" style="left:1408.7px;width:300px;top:635.83px;font-size:15.5px">0,00</div>
<div class="bdg" style="top:631.80px">Ditutup &amp; Direkam</div>
<div class="rw" style="top:669.14px;height:47.14px;background:#fafafb;border:0"></div>
<div class="cb" style="top:682.74px"></div>
<div class="c idc" style="left:215.3px;top:682.44px;font-size:15.3px">POS/00097</div>
<div class="c" style="left:621.3px;top:682.37px;font-size:15.5px">Kantin Ahmad</div>
<div class="av" style="top:678.74px"><svg width="26" height="26" viewBox="0 0 26 26"><circle cx="13" cy="13" r="12.3" fill="#fff" stroke="#86d686" stroke-width="1.1"/><circle cx="13" cy="13" r="10" fill="none" stroke="#bdbdbd" stroke-width="0.8" stroke-dasharray="0.9 0.7"/><circle cx="2.7" cy="13.3" r="1" fill="#555"/><circle cx="23.9" cy="13.3" r="1" fill="#555"/><path d="M8.3 11.8 Q13 6.5 17.7 11.8" fill="none" stroke="#7fd37f" stroke-width="1" stroke-dasharray="1.2 0.6"/><path d="M7 9.5 Q13 3.5 19 9.5" fill="none" stroke="#b5e6b5" stroke-width="0.8"/><circle cx="13" cy="12.7" r="2.2" fill="#ebb0c8"/><path d="M8.4 15.3 Q13 18.6 17.6 15.3" fill="none" stroke="#47c447" stroke-width="1.7"/><path d="M7.3 18.3 Q13 22.3 18.7 18.3" fill="none" stroke="#38c238" stroke-width="2.3"/></svg></div>
<div class="c" style="left:780.6px;top:684.43px;font-size:15.9px">Administrator</div>
<div class="c" style="left:986.5px;top:682.37px;font-size:15.5px">02/07/2025 10:36:39</div>
<div class="c" style="left:1160.4px;top:682.37px;font-size:15.5px">02/07/2025 10:47:46</div>
<div class="c r" style="left:1151.8px;width:300px;top:682.37px;font-size:15.5px">0,00</div>
<div class="c r" style="left:1280.2px;width:300px;top:682.37px;font-size:15.5px">0,00</div>
<div class="c r" style="left:1408.7px;width:300px;top:682.37px;font-size:15.5px">0,00</div>
<div class="bdg" style="top:678.34px">Ditutup &amp; Direkam</div>
<div class="rw" style="top:715.68px;height:47.14px;background:#fff;border:0"></div>
<div class="cb" style="top:729.28px"></div>
<div class="c idc" style="left:215.3px;top:728.98px;font-size:15.3px">POS/00094</div>
<div class="c" style="left:621.3px;top:728.91px;font-size:15.5px">Kantin Ahmad</div>
<div class="av" style="top:725.28px"><svg width="26" height="26" viewBox="0 0 26 26"><circle cx="13" cy="13" r="12.3" fill="#fff" stroke="#86d686" stroke-width="1.1"/><circle cx="13" cy="13" r="10" fill="none" stroke="#bdbdbd" stroke-width="0.8" stroke-dasharray="0.9 0.7"/><circle cx="2.7" cy="13.3" r="1" fill="#555"/><circle cx="23.9" cy="13.3" r="1" fill="#555"/><path d="M8.3 11.8 Q13 6.5 17.7 11.8" fill="none" stroke="#7fd37f" stroke-width="1" stroke-dasharray="1.2 0.6"/><path d="M7 9.5 Q13 3.5 19 9.5" fill="none" stroke="#b5e6b5" stroke-width="0.8"/><circle cx="13" cy="12.7" r="2.2" fill="#ebb0c8"/><path d="M8.4 15.3 Q13 18.6 17.6 15.3" fill="none" stroke="#47c447" stroke-width="1.7"/><path d="M7.3 18.3 Q13 22.3 18.7 18.3" fill="none" stroke="#38c238" stroke-width="2.3"/></svg></div>
<div class="c" style="left:780.6px;top:730.97px;font-size:15.9px">Administrator</div>
<div class="c" style="left:986.5px;top:728.91px;font-size:15.5px">18/06/2025 18:53:00</div>
<div class="c" style="left:1160.4px;top:728.91px;font-size:15.5px">23/06/2025 20:23:18</div>
<div class="c r" style="left:1151.8px;width:300px;top:728.91px;font-size:15.5px">0,00</div>
<div class="c r" style="left:1280.2px;width:300px;top:728.91px;font-size:15.5px">0,00</div>
<div class="c r" style="left:1408.7px;width:300px;top:728.91px;font-size:15.5px">0,00</div>
<div class="bdg" style="top:724.88px">Ditutup &amp; Direkam</div>
<div class="rw" style="top:762.22px;height:47.14px;background:#fafafb;border:0"></div>
<div class="cb" style="top:775.82px"></div>
<div class="c idc" style="left:215.3px;top:775.52px;font-size:15.3px">POS/00092</div>
<div class="c" style="left:621.3px;top:775.45px;font-size:15.5px">Kantin Ahmad</div>
<div class="av" style="top:771.82px"><svg width="26" height="26" viewBox="0 0 26 26"><circle cx="13" cy="13" r="12.3" fill="#fff" stroke="#86d686" stroke-width="1.1"/><circle cx="13" cy="13" r="10" fill="none" stroke="#bdbdbd" stroke-width="0.8" stroke-dasharray="0.9 0.7"/><circle cx="2.7" cy="13.3" r="1" fill="#555"/><circle cx="23.9" cy="13.3" r="1" fill="#555"/><path d="M8.3 11.8 Q13 6.5 17.7 11.8" fill="none" stroke="#7fd37f" stroke-width="1" stroke-dasharray="1.2 0.6"/><path d="M7 9.5 Q13 3.5 19 9.5" fill="none" stroke="#b5e6b5" stroke-width="0.8"/><circle cx="13" cy="12.7" r="2.2" fill="#ebb0c8"/><path d="M8.4 15.3 Q13 18.6 17.6 15.3" fill="none" stroke="#47c447" stroke-width="1.7"/><path d="M7.3 18.3 Q13 22.3 18.7 18.3" fill="none" stroke="#38c238" stroke-width="2.3"/></svg></div>
<div class="c" style="left:780.6px;top:777.51px;font-size:15.9px">Administrator</div>
<div class="c" style="left:986.5px;top:775.45px;font-size:15.5px">18/06/2025 15:27:21</div>
<div class="c" style="left:1160.4px;top:775.45px;font-size:15.5px">18/06/2025 15:27:52</div>
<div class="c r" style="left:1151.8px;width:300px;top:775.45px;font-size:15.5px">0,00</div>
<div class="c r" style="left:1280.2px;width:300px;top:775.45px;font-size:15.5px">0,00</div>
<div class="c r" style="left:1408.7px;width:300px;top:775.45px;font-size:15.5px">0,00</div>
<div class="bdg" style="top:771.42px">Ditutup &amp; Direkam</div>
<div class="rw" style="top:808.76px;height:47.14px;background:#fff;border:0"></div>
<div class="cb" style="top:822.36px"></div>
<div class="c idc" style="left:215.3px;top:822.06px;font-size:15.3px">POS/00090</div>
<div class="c" style="left:621.3px;top:821.99px;font-size:15.5px">Kantin Ahmad</div>
<div class="av" style="top:818.36px"><svg width="26" height="26" viewBox="0 0 26 26"><circle cx="13" cy="13" r="12.3" fill="#fff" stroke="#86d686" stroke-width="1.1"/><circle cx="13" cy="13" r="10" fill="none" stroke="#bdbdbd" stroke-width="0.8" stroke-dasharray="0.9 0.7"/><circle cx="2.7" cy="13.3" r="1" fill="#555"/><circle cx="23.9" cy="13.3" r="1" fill="#555"/><path d="M8.3 11.8 Q13 6.5 17.7 11.8" fill="none" stroke="#7fd37f" stroke-width="1" stroke-dasharray="1.2 0.6"/><path d="M7 9.5 Q13 3.5 19 9.5" fill="none" stroke="#b5e6b5" stroke-width="0.8"/><circle cx="13" cy="12.7" r="2.2" fill="#ebb0c8"/><path d="M8.4 15.3 Q13 18.6 17.6 15.3" fill="none" stroke="#47c447" stroke-width="1.7"/><path d="M7.3 18.3 Q13 22.3 18.7 18.3" fill="none" stroke="#38c238" stroke-width="2.3"/></svg></div>
<div class="c" style="left:780.6px;top:824.05px;font-size:15.9px">Administrator</div>
<div class="c" style="left:986.5px;top:821.99px;font-size:15.5px">18/06/2025 14:46:19</div>
<div class="c" style="left:1160.4px;top:821.99px;font-size:15.5px">18/06/2025 14:53:29</div>
<div class="c r" style="left:1151.8px;width:300px;top:821.99px;font-size:15.5px">0,00</div>
<div class="c r" style="left:1280.2px;width:300px;top:821.99px;font-size:15.5px">0,00</div>
<div class="c r" style="left:1408.7px;width:300px;top:821.99px;font-size:15.5px">0,00</div>
<div class="bdg" style="top:817.96px">Ditutup &amp; Direkam</div>
<div class="rw" style="top:855.30px;height:47.14px;background:#fafafb;border:0"></div>
<div class="cb" style="top:868.90px"></div>
<div class="c idc" style="left:215.3px;top:868.60px;font-size:15.3px">POS/00089</div>
<div class="c" style="left:621.3px;top:868.53px;font-size:15.5px">Kantin Ahmad</div>
<div class="av" style="top:864.90px"><svg width="26" height="26" viewBox="0 0 26 26"><circle cx="13" cy="13" r="12.3" fill="#fff" stroke="#86d686" stroke-width="1.1"/><circle cx="13" cy="13" r="10" fill="none" stroke="#bdbdbd" stroke-width="0.8" stroke-dasharray="0.9 0.7"/><circle cx="2.7" cy="13.3" r="1" fill="#555"/><circle cx="23.9" cy="13.3" r="1" fill="#555"/><path d="M8.3 11.8 Q13 6.5 17.7 11.8" fill="none" stroke="#7fd37f" stroke-width="1" stroke-dasharray="1.2 0.6"/><path d="M7 9.5 Q13 3.5 19 9.5" fill="none" stroke="#b5e6b5" stroke-width="0.8"/><circle cx="13" cy="12.7" r="2.2" fill="#ebb0c8"/><path d="M8.4 15.3 Q13 18.6 17.6 15.3" fill="none" stroke="#47c447" stroke-width="1.7"/><path d="M7.3 18.3 Q13 22.3 18.7 18.3" fill="none" stroke="#38c238" stroke-width="2.3"/></svg></div>
<div class="c" style="left:780.6px;top:870.59px;font-size:15.9px">Administrator</div>
<div class="c" style="left:986.5px;top:868.53px;font-size:15.5px">18/06/2025 12:21:25</div>
<div class="c" style="left:1160.4px;top:868.53px;font-size:15.5px">18/06/2025 14:46:18</div>
<div class="c r" style="left:1151.8px;width:300px;top:868.53px;font-size:15.5px">0,00</div>
<div class="c r" style="left:1280.2px;width:300px;top:868.53px;font-size:15.5px">0,00</div>
<div class="c r" style="left:1408.7px;width:300px;top:868.53px;font-size:15.5px">0,00</div>
<div class="bdg" style="top:864.50px">Ditutup &amp; Direkam</div>
<div class="ab" style="left:164px;width:1747px;top:157px;height:1px;background:#dcdfe3"></div>
<div class="ab" style="left:164px;width:1747px;top:203.24px;height:1px;background:#dfe1e5"></div>
<div class="ab" style="left:164px;width:1747px;top:249.78px;height:1px;background:#dfe1e5"></div>
<div class="ab" style="left:164px;width:1747px;top:296.32px;height:1px;background:#dfe1e5"></div>
<div class="ab" style="left:164px;width:1747px;top:342.86px;height:1px;background:#dfe1e5"></div>
<div class="ab" style="left:164px;width:1747px;top:389.40px;height:1px;background:#dfe1e5"></div>
<div class="ab" style="left:164px;width:1747px;top:435.94px;height:1px;background:#dfe1e5"></div>
<div class="ab" style="left:164px;width:1747px;top:482.48px;height:1px;background:#dfe1e5"></div>
<div class="ab" style="left:164px;width:1747px;top:529.02px;height:1px;background:#dfe1e5"></div>
<div class="ab" style="left:164px;width:1747px;top:575.56px;height:1px;background:#dfe1e5"></div>
<div class="ab" style="left:164px;width:1747px;top:622.10px;height:1px;background:#dfe1e5"></div>
<div class="ab" style="left:164px;width:1747px;top:668.64px;height:1px;background:#dfe1e5"></div>
<div class="ab" style="left:164px;width:1747px;top:715.18px;height:1px;background:#dfe1e5"></div>
<div class="ab" style="left:164px;width:1747px;top:761.72px;height:1px;background:#dfe1e5"></div>
<div class="ab" style="left:164px;width:1747px;top:808.26px;height:1px;background:#dfe1e5"></div>
<div class="ab" style="left:164px;width:1747px;top:854.80px;height:1px;background:#dfe1e5"></div>
<div class="ab" style="left:164px;width:1747px;top:901.34px;height:1px;background:#dfe1e5"></div>
<div class="ab" style="left:1911px;top:114px;width:7px;height:791px;background:#f1f1f1"></div>
<div class="ab" style="left:1911px;top:115px;width:7px;height:165px;background:#8a8a8a;border-radius:4px"></div>
<div class="ab" style="left:465px;top:104px;width:864px;height:303px;background:#fff;border:1px solid #d5d9de;border-radius:5px"></div>
<svg class="ab" style="left:502px;top:131.5px" width="15" height="14" viewBox="0 0 15 14"><path d="M0.4 0.4 H14 L9 5.8 V13.4 L6 11.5 V5.8 Z" fill="#0d5a54"/></svg>
<div class="dh" style="left:525.5px;top:128.84px;font-size:17.2px">Penyaring</div>
<div class="dd" style="left:507.3px;top:166.20px;font-size:15.0px">Sesi Saya</div>
<div class="sep" style="left:484px;top:198px;width:249px"></div>
<div class="dd" style="left:507.3px;top:216.00px;font-size:15.0px">Dalam Proses</div>
<div class="sep" style="left:484px;top:248px;width:249px"></div>
<div class="dd" style="left:507.4px;top:264.60px;font-size:15.0px">Tanggal Pembukaan</div>
<div class="caret" style="left:714.5px;top:270.5px;border-top-color:#3a3f46"></div>
<div class="sep" style="left:484px;top:297px;width:249px"></div>
<div class="dd" style="left:507.4px;top:313.60px;font-size:15.0px">Tambahkan Penyaring Sendiri</div>
<div class="vsep" style="left:751px;top:124px;height:212px"></div>
<svg class="ab" style="left:788px;top:128.5px" width="18" height="18" viewBox="0 0 18 18"><path d="M9 0.5 L17.3 4.7 L9 8.9 L0.7 4.7 Z" fill="#1f9e68"/><path d="M2.3 7.7 L9 11.1 L15.7 7.7 L17.3 8.6 L9 12.8 L0.7 8.6 Z" fill="#1f9e68"/><path d="M2.3 11.6 L9 15 L15.7 11.6 L17.3 12.5 L9 16.7 L0.7 12.5 Z" fill="#1f9e68"/></svg>
<div class="dh" style="left:815.5px;top:128.70px;font-size:17.6px">Dikelompokkan</div>
<div class="dh" style="left:789.0px;top:154.34px;font-size:17.2px">berdasarkan</div>
<div class="dd" style="left:793.6px;top:191.80px;font-size:15.0px">Dibuka Oleh</div>
<div class="dd" style="left:793.6px;top:222.80px;font-size:15.0px">POS</div>
<div class="dd" style="left:793.6px;top:252.60px;font-size:15.0px">Status</div>
<div class="dd" style="left:793.6px;top:282.80px;font-size:15.0px">Tanggal Pembukaan</div>
<div class="dd" style="left:793.6px;top:313.80px;font-size:15.0px">Tanggal Penutupan</div>
<div class="caret" style="left:1028.6px;top:288.3px;border-top-color:#3a3f46"></div>
<div class="caret" style="left:1028.6px;top:318.6px;border-top-color:#3a3f46"></div>
<div class="sep" style="left:770px;top:346px;width:277px"></div>
<div class="dd" style="left:793.6px;top:362.60px;font-size:15.0px">Tambahkan Grup Kustom</div>
<div class="caret" style="left:1024.5px;top:368.6px;border-top-color:#6b7079"></div>
<div class="vsep" style="left:1065px;top:124px;height:261px"></div>
<svg class="ab" style="left:1101.5px;top:129.5px" width="18" height="17" viewBox="0 0 18 17"><path d="M9 0.5 L11.3 5.6 L16.9 6.2 L12.7 9.9 L13.9 15.5 L9 12.7 L4.1 15.5 L5.3 9.9 L1.1 6.2 L6.7 5.6 Z" fill="#f3c61a"/></svg>
<div class="dh" style="left:1128.4px;top:128.84px;font-size:17.2px">Favorit</div>
<div class="ab" style="left:1084px;top:159.2px;width:223px;height:29.7px;background:#e9eaeb"></div>
<div class="dd" style="left:1107.2px;top:165.83px;font-size:15.5px">Simpan pencarian saat ini</div>
<div class="caret" style="left:1289.5px;top:171.2px;border-top-color:#2b2f35"></div>
<svg class="ab" style="left:0;top:0" width="1918" height="905" viewBox="0 0 1918 905"><rect x="471.75" y="102.9" width="854.8" height="303.9" rx="1.5" fill="none" stroke="#ff0000" stroke-width="3.6"/><rect x="1292.85" y="57.45" width="33.7" height="36.8" rx="1.5" fill="none" stroke="#ff0000" stroke-width="3.6"/></svg>
<svg class="ab" style="left:1335px;top:55px" width="100" height="42" viewBox="1335 55 100 42"><path d="M1343.5 75.9 H1425" stroke="#ff2a2a" stroke-width="2.1" stroke-linecap="round"/><path d="M1358.7 60.3 L1343.3 75.9 L1358.7 91.2" fill="none" stroke="#ff2a2a" stroke-width="2.1" stroke-linecap="round"/></svg>
</body></html>
